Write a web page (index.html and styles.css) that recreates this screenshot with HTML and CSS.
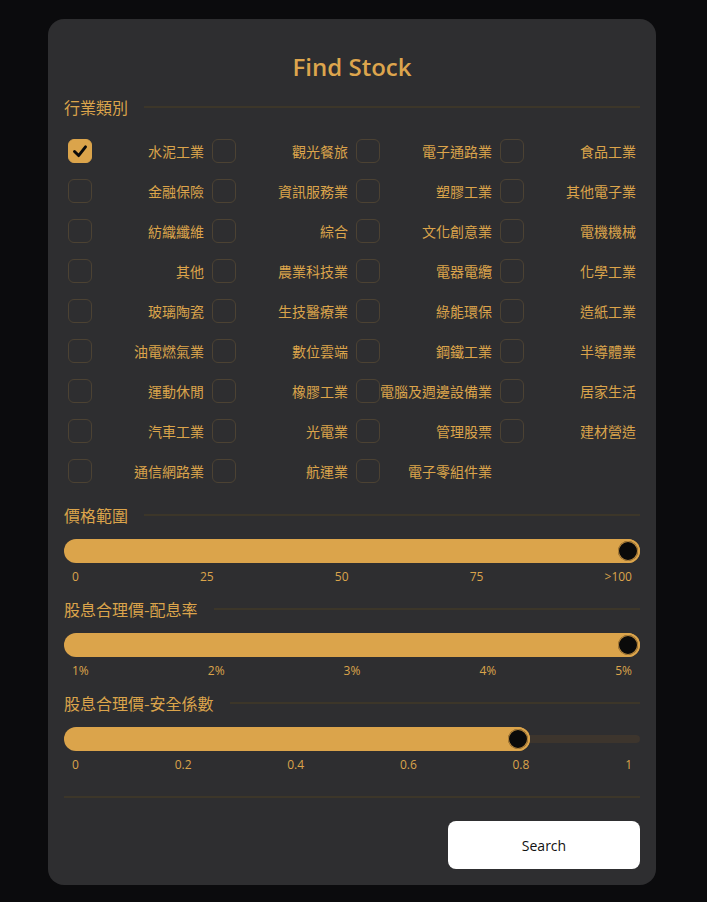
FILE: index.html
```html
<!DOCTYPE html>
<html lang="zh-Hant">
<head>
    <meta charset="UTF-8">
    <meta name="viewport" content="width=device-width, initial-scale=1.0">
    <title>Find Stock</title>
    <link rel="stylesheet" href="styles.css">
</head>
<body>
    <div class="card">
        <h1 class="title">Find Stock</h1>

        <div class="section-head"><span>行業類別</span></div>
        <div class="industries">
            <label class="item"><span class="box checked"><svg viewBox="0 0 24 24"><polyline points="6,12.5 10.5,17 18,7.5"/></svg></span><span class="name">水泥工業</span></label>
            <label class="item"><span class="box"></span><span class="name">觀光餐旅</span></label>
            <label class="item"><span class="box"></span><span class="name">電子通路業</span></label>
            <label class="item"><span class="box"></span><span class="name">食品工業</span></label>

            <label class="item"><span class="box"></span><span class="name">金融保險</span></label>
            <label class="item"><span class="box"></span><span class="name">資訊服務業</span></label>
            <label class="item"><span class="box"></span><span class="name">塑膠工業</span></label>
            <label class="item"><span class="box"></span><span class="name">其他電子業</span></label>

            <label class="item"><span class="box"></span><span class="name">紡織纖維</span></label>
            <label class="item"><span class="box"></span><span class="name">綜合</span></label>
            <label class="item"><span class="box"></span><span class="name">文化創意業</span></label>
            <label class="item"><span class="box"></span><span class="name">電機機械</span></label>

            <label class="item"><span class="box"></span><span class="name">其他</span></label>
            <label class="item"><span class="box"></span><span class="name">農業科技業</span></label>
            <label class="item"><span class="box"></span><span class="name">電器電纜</span></label>
            <label class="item"><span class="box"></span><span class="name">化學工業</span></label>

            <label class="item"><span class="box"></span><span class="name">玻璃陶瓷</span></label>
            <label class="item"><span class="box"></span><span class="name">生技醫療業</span></label>
            <label class="item"><span class="box"></span><span class="name">綠能環保</span></label>
            <label class="item"><span class="box"></span><span class="name">造紙工業</span></label>

            <label class="item"><span class="box"></span><span class="name">油電燃氣業</span></label>
            <label class="item"><span class="box"></span><span class="name">數位雲端</span></label>
            <label class="item"><span class="box"></span><span class="name">鋼鐵工業</span></label>
            <label class="item"><span class="box"></span><span class="name">半導體業</span></label>

            <label class="item"><span class="box"></span><span class="name">運動休閒</span></label>
            <label class="item"><span class="box"></span><span class="name">橡膠工業</span></label>
            <label class="item"><span class="box"></span><span class="name">電腦及週邊設備業</span></label>
            <label class="item"><span class="box"></span><span class="name">居家生活</span></label>

            <label class="item"><span class="box"></span><span class="name">汽車工業</span></label>
            <label class="item"><span class="box"></span><span class="name">光電業</span></label>
            <label class="item"><span class="box"></span><span class="name">管理股票</span></label>
            <label class="item"><span class="box"></span><span class="name">建材營造</span></label>

            <label class="item"><span class="box"></span><span class="name">通信網路業</span></label>
            <label class="item"><span class="box"></span><span class="name">航運業</span></label>
            <label class="item"><span class="box"></span><span class="name">電子零組件業</span></label>
        </div>

        <div class="section-head"><span>價格範圍</span></div>
        <div class="slider">
            <div class="track" style="--v: 1">
                <div class="fill"></div>
                <span class="thumb"></span>
            </div>
            <div class="ticks"><span>0</span><span>25</span><span>50</span><span>75</span><span>&gt;100</span></div>
        </div>

        <div class="section-head"><span>股息合理價-配息率</span></div>
        <div class="slider">
            <div class="track" style="--v: 1">
                <div class="fill"></div>
                <span class="thumb"></span>
            </div>
            <div class="ticks"><span>1%</span><span>2%</span><span>3%</span><span>4%</span><span>5%</span></div>
        </div>

        <div class="section-head"><span>股息合理價-安全係數</span></div>
        <div class="slider">
            <div class="track" style="--v: 0.8">
                <div class="fill"></div>
                <span class="thumb"></span>
            </div>
            <div class="ticks"><span>0</span><span>0.2</span><span>0.4</span><span>0.6</span><span>0.8</span><span>1</span></div>
        </div>

        <hr class="divider">

        <div class="actions">
            <button type="button" class="search">Search</button>
        </div>
    </div>
</body>
</html>
```

FILE: styles.css
```css
body {
    margin: 0;
    min-height: 902px;
    background-color: #0b0b0d;
    font-family: "Open Sans", "Noto Sans CJK TC", sans-serif;
    color: #dba44b;
}
.card {
    width: 608px;
    box-sizing: border-box;
    margin: 19px 0 0 48px;
    padding: 32px 16px 16px;
    background: #2e2e30;
    border-radius: 16px;
    display: flex;
    flex-direction: column;
    gap: 14px;
}
.title {
    margin: 0;
    font-size: 24px;
    line-height: 32px;
    font-weight: 600;
    text-align: center;
    color: #dda54d;
}
.section-head {
    display: flex;
    align-items: center;
    gap: 16px;
    font-family: "Noto Sans CJK TC", sans-serif;
    font-size: 16px;
    line-height: 20px;
}
.section-head::after {
    content: "";
    flex: 1;
    height: 2px;
    background: #3c3629;
}
.industries {
    display: grid;
    grid-template-columns: repeat(4, 1fr);
}
.item {
    display: flex;
    align-items: center;
    height: 40px;
    padding: 0 4px;
    font-family: "Noto Sans CJK TC", sans-serif;
    font-size: 14px;
    cursor: pointer;
}
.box {
    flex: none;
    width: 24px;
    height: 24px;
    box-sizing: border-box;
    border: 1px solid #4c4233;
    border-radius: 6px;
    display: flex;
    align-items: center;
    justify-content: center;
}
.box.checked {
    background: #dba44b;
    border-color: #dba44b;
}
.box svg {
    width: 22px;
    height: 22px;
    fill: none;
    stroke: #0b0b0b;
    stroke-width: 3.2;
    stroke-linecap: round;
    stroke-linejoin: round;
}
.name {
    margin-left: auto;
    white-space: nowrap;
}
.slider {
    display: flex;
    flex-direction: column;
    gap: 6px;
}
.track {
    position: relative;
    height: 24px;
}
.track::before {
    content: "";
    position: absolute;
    left: 0;
    right: 0;
    top: 8px;
    height: 8px;
    border-radius: 4px;
    background: #3d352d;
}
.fill {
    position: relative;
    height: 24px;
    width: calc(24px + (100% - 24px) * var(--v));
    border-radius: 12px;
    background: #dba44b;
}
.thumb {
    position: absolute;
    top: 0;
    left: calc((100% - 24px) * var(--v));
    width: 24px;
    height: 24px;
    box-sizing: border-box;
    border-radius: 50%;
    background: #0a0a0a;
    border: 2px solid #dba44b;
    box-shadow: 0 0 0 1px #b8873c inset;
}
.ticks {
    display: flex;
    justify-content: space-between;
    padding: 0 8px;
    font-size: 12px;
    line-height: 16px;
}
.divider {
    margin: 9px 0 0;
    border: none;
    height: 2px;
    background: #3c3629;
}
.actions {
    display: flex;
    justify-content: flex-end;
    margin-top: 9px;
}
.search {
    width: 192px;
    height: 48px;
    border: none;
    border-radius: 8px;
    background: #fff;
    color: #111;
    font-family: "Open Sans", sans-serif;
    font-size: 14px;
    cursor: pointer;
}
```
